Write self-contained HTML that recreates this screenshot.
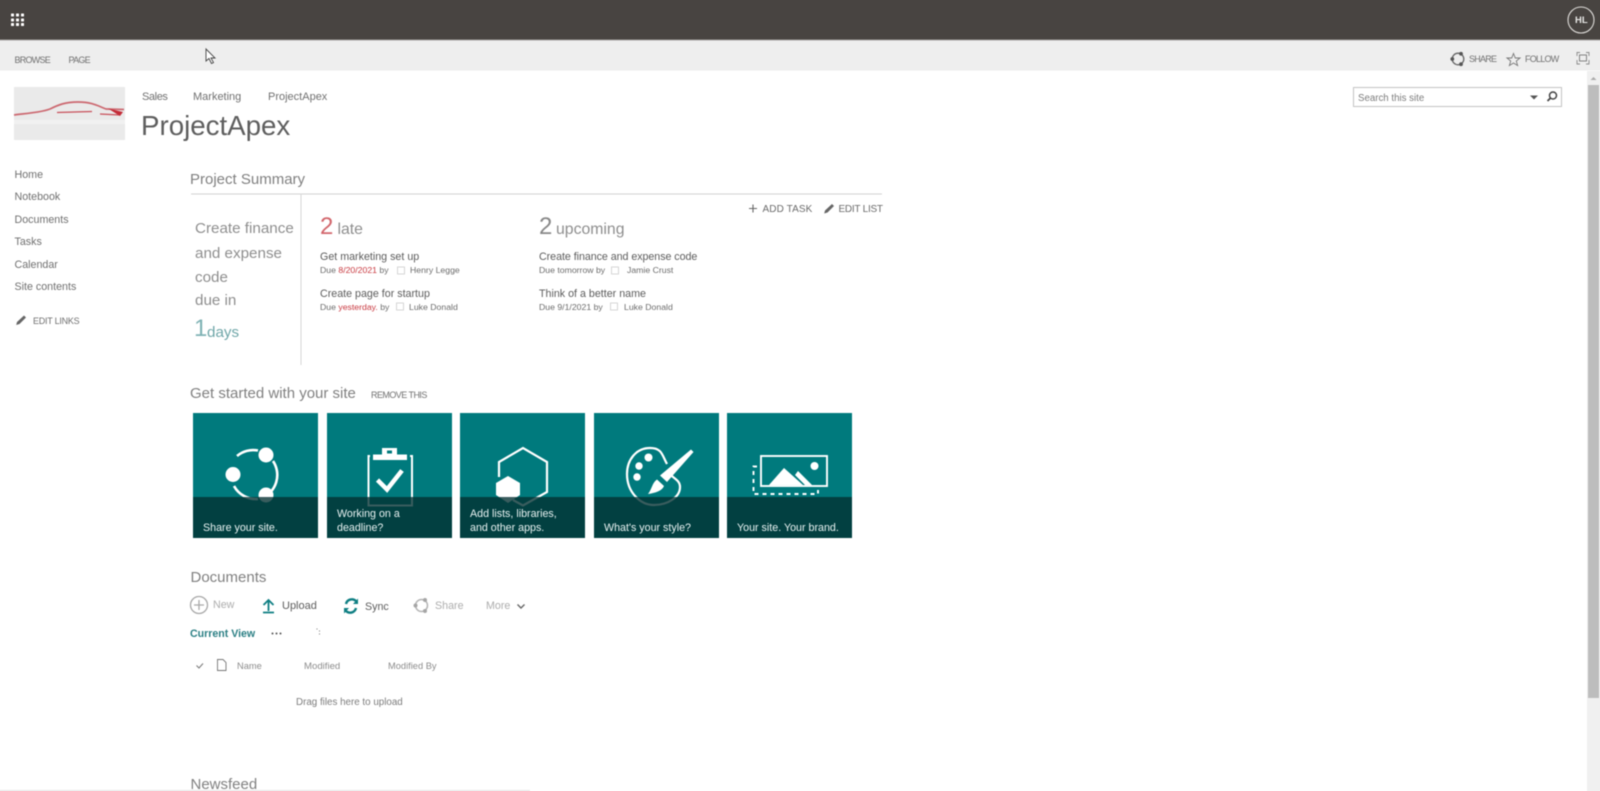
<!DOCTYPE html>
<html><head><meta charset="utf-8"><style>
html,body{margin:0;padding:0;background:#fff;width:1600px;height:791px;overflow:hidden}
body{position:relative;font-family:"Liberation Sans",sans-serif;color:#666}
#w{position:absolute;left:0;top:0;width:1600px;height:791px;filter:blur(.4px)}
.t{position:absolute;white-space:nowrap;line-height:20px;height:20px}
svg{position:absolute;left:0;top:0;overflow:visible}
.n{font-size:10.7px;color:#707070}
.s{font-size:9px;color:#707070;letter-spacing:-.75px}
.h{font-size:15px;color:#808080}
.b{font-size:15.200px;color:#8e8e8e}
.m{font-size:10.700px;color:#5c5c5c}
.d{font-size:8.700px;color:#6c6c6c}
.c{font-size:10.700px;color:#e8f2f2}
.r{color:#c8383f}
.g{font-size:10.700px;color:#adadad}
.k{font-size:9.300px;color:#8c8c8c}
.e{font-size:10px;color:#6a6a6a;letter-spacing:-.2px}
</style></head><body><div id="w">
<svg width="1600" height="791" viewBox="0 0 1600 791">
<rect x="-5" y="-5" width="1610" height="45" fill="#484441"/><rect x="-5" y="39.500" width="1610" height="1" fill="#a5a3a1"/>
<rect x="-5" y="40.500" width="1610" height="30" fill="#eeeeee"/>
<g fill="#fff"><rect x="11" y="13.500" width="3" height="3" rx=".6"/><rect x="16" y="13.500" width="3" height="3" rx=".6"/><rect x="21" y="13.500" width="3" height="3" rx=".6"/><rect x="11" y="18.500" width="3" height="3" rx=".6"/><rect x="16" y="18.500" width="3" height="3" rx=".6"/><rect x="21" y="18.500" width="3" height="3" rx=".6"/><rect x="11" y="23" width="3" height="3" rx=".6"/><rect x="16" y="23" width="3" height="3" rx=".6"/><rect x="21" y="23" width="3" height="3" rx=".6"/></g>
<circle cx="1581" cy="20" r="13" fill="none" stroke="#dedcd9" stroke-width="1.100"/>
<path d="M206 49V61L209 58.500L211.500 63.500L213.500 62.500L211 58H215Z" fill="#fff" stroke="#444" stroke-width=".9"/>
<!-- share/star/focus -->
<circle cx="1458" cy="59" r="5.800" fill="none" stroke="#666" stroke-width="1.300"/><g fill="#555"><circle cx="1461" cy="53.800" r="1.900"/><circle cx="1452.300" cy="59" r="1.900"/><circle cx="1461" cy="64.200" r="1.900"/></g>
<path d="M1513.500 53.500L1515.300 58H1520L1516.300 61L1517.600 65.500L1513.500 63L1509.400 65.500L1510.700 61L1507 58H1511.700Z" fill="none" stroke="#777" stroke-width=".9"/>
<path d="M1577 56V52.500H1580M1586 52.500H1589V56M1589 60V64H1586M1580 64H1577V60" fill="none" stroke="#8a8a8a" stroke-width=".9"/><rect x="1579.500" y="55" width="7" height="6" fill="none" stroke="#777" stroke-width=".9"/>
<!-- logo -->
<rect x="14" y="87" width="111" height="53" fill="#eaeaea"/>
<rect x="14" y="120" width="111" height="4" fill="#f1f1f1"/>
<path d="M14 115C30 113 42 112 50 109C58 105 65 102 78 102C92 102 98 106 106 109L124 109.500" fill="none" stroke="#cc6870" stroke-width="1.700"/>
<path d="M57 112.500L92 111.500M100 114L120 115" stroke="#c8505a" stroke-width="1.300" fill="none"/><path d="M108 108.500L123 112L120 116Z" fill="#c42c38"/>
<!-- search -->
<rect x="1353.500" y="87.500" width="208" height="19" fill="#fff" stroke="#c4c4c4"/>
<path d="M1530 95.500H1538L1534 99.500Z" fill="#555"/><circle cx="1553" cy="95.500" r="3.500" fill="none" stroke="#444" stroke-width="1.500"/><path d="M1550.500 98L1547.500 101" stroke="#444" stroke-width="1.800"/>
<!-- scrollbar -->
<rect x="1587" y="71" width="18" height="725" fill="#f0f0f0"/><rect x="1588" y="85" width="11" height="613" fill="#bdbdbd"/><path d="M1590.500 80L1593.500 77L1596.500 80Z" fill="#aaa"/>
<!-- lines -->
<rect x="191" y="193.500" width="691" height="1" fill="#d2d2d2"/><rect x="300.500" y="194" width="1" height="171" fill="#d6d6d6"/>
<rect x="-5" y="790" width="535" height="1" fill="#e2e2e2"/>
<path d="M749 208.500H757M753 204.500V212.500" stroke="#666" stroke-width="1.100"/>
<path d="M825 210.500L832 204L834 206L827.500 212.500L824.200 213.500Z" fill="#666"/>
<path d="M17 322L24 315.500L26 317.500L19.500 324L16.200 325Z" fill="#666"/>
<!-- tiles -->
<g fill="#007a7d"><rect x="193" y="413" width="125" height="125"/><rect x="327" y="413" width="125" height="125"/><rect x="460" y="413" width="125" height="125"/><rect x="594" y="413" width="125" height="125"/><rect x="727" y="413" width="125" height="125"/></g>
<!-- share icon -->
<path d="M237 456A25 25 0 0 1 258 450.500M273 461A25 25 0 0 1 262 498M234 486A25 25 0 0 0 258 499" fill="none" stroke="#fff" stroke-width="2.600"/><g fill="#fff"><circle cx="266" cy="455" r="7.500"/><circle cx="233" cy="474.500" r="7.500"/><circle cx="266" cy="495" r="7.500"/></g>
<!-- clipboard -->
<path d="M370 456H368.500V505.500H412V456H410" fill="none" stroke="#fff" stroke-width="2"/><path d="M373 460V454.500H382V448H397V454.500H407V460Z" fill="#fff"/><rect x="387" y="450.500" width="5" height="3" fill="#007a7d"/><path d="M377.500 480L387 489.500L402 470.500" fill="none" stroke="#fff" stroke-width="4.500"/>
<!-- hex -->
<path d="M499 477V462L523 448L547 462V492L523 505.500L513 500" fill="none" stroke="#fff" stroke-width="2.200"/><path d="M508 476L520 483V495L508 503L496 495V483Z" fill="#fff"/>
<!-- palette -->
<path d="M667 464C662 455 662 448 650 448C636 448 627 460 627 474C627 492 640 505 654 505C668 505 680 497 680 487C680 479 671 478 669 472" fill="none" stroke="#fff" stroke-width="2.200"/><g fill="#fff"><circle cx="648.500" cy="457.500" r="4"/><circle cx="639" cy="466" r="3.700"/><circle cx="637" cy="477" r="3.700"/></g><path d="M691 449.500L693.500 452L667 482L660 475.500Z" fill="#fff"/><path d="M657 479.500L664 486C662 491 655 493 648 494C652 489 652 483 657 479.500Z" fill="#fff"/>
<!-- image -->
<rect x="761" y="456" width="66" height="30" fill="none" stroke="#fff" stroke-width="1.900"/><circle cx="814.500" cy="466" r="4" fill="#fff"/><path d="M769 485L784 468L803 485Z" fill="#fff"/><path d="M795 475L798 471L812 485H805Z" fill="#fff"/><path d="M757 466.500H753.500V494H818V490" fill="none" stroke="#fff" stroke-width="1.900" stroke-dasharray="4 4"/>
<!-- bands -->
<g fill="#022f31" fill-opacity=".78"><rect x="193" y="497" width="125" height="41"/><rect x="327" y="497" width="125" height="41"/><rect x="460" y="497" width="125" height="41"/><rect x="594" y="497" width="125" height="41"/><rect x="727" y="497" width="125" height="41"/></g>
<!-- doc toolbar -->
<circle cx="199" cy="605" r="8.500" fill="none" stroke="#a8a8a8" stroke-width="1.300"/><path d="M194 605H204M199 600V610" stroke="#a8a8a8" stroke-width="1.300"/>
<path d="M268.500 600V611M263.500 605L268.500 600L273.500 605M263 612.500H274" fill="none" stroke="#0f7f83" stroke-width="1.800"/>
<path d="M346 604A6 6 0 0 1 356 601M356 608A6 6 0 0 1 346 611" fill="none" stroke="#0f7f83" stroke-width="2.400"/><path d="M353 604H358V598.500ZM349 608H344V613.500Z" fill="#0f7f83"/>
<circle cx="421.500" cy="605.500" r="6" fill="none" stroke="#b5b5b5" stroke-width="1.500"/><g fill="#a5a5a5"><circle cx="425" cy="600" r="2"/><circle cx="415.500" cy="605.500" r="2"/><circle cx="425" cy="611" r="2"/></g>
<path d="M517.500 604.500L521 608L524.500 604.500" fill="none" stroke="#666" stroke-width="1.400"/>
<g fill="#555"><circle cx="272.500" cy="633.500" r="1"/><circle cx="276.500" cy="633.500" r="1"/><circle cx="280.500" cy="633.500" r="1"/></g>
<g fill="#888"><circle cx="317" cy="629" r=".6"/><circle cx="319.500" cy="631" r=".6"/><circle cx="319.500" cy="634" r=".6"/></g>
<path d="M196.500 665.500L199 668L203 663.500" fill="none" stroke="#777" stroke-width="1"/>
<path d="M217.500 659.500H223L226 662.500V670.500H217.500Z" fill="none" stroke="#777" stroke-width=".9"/>
<!-- person boxes -->
<g fill="none" stroke="#ccc" stroke-width=".8"><rect x="397.500" y="267" width="7" height="7"/><rect x="396.500" y="303" width="7" height="7"/><rect x="611.500" y="267" width="7" height="7"/><rect x="610.500" y="303" width="7" height="7"/></g>
</svg>

<span class="t s" style="left:14.500px;top:50px">BROWSE</span>
<span class="t s" style="left:68.500px;top:50px">PAGE</span>
<span class="t s" style="left:1469px;top:49px">SHARE</span>
<span class="t s" style="left:1525px;top:49px">FOLLOW</span>
<span class="t" style="left:1575px;top:11px;font-size:9.500px;font-weight:bold;color:#e8e8e6">HL</span>

<span class="t n" style="left:142px;top:87px;font-size:11px;letter-spacing:-.4px">Sales</span>
<span class="t n" style="left:193px;top:87px;font-size:11px">Marketing</span>
<span class="t n" style="left:268px;top:87px;font-size:11px">ProjectApex</span>
<span class="t" style="left:141px;top:114px;font-size:27.700px;color:#5e5e5e;line-height:24px;height:24px">ProjectApex</span>
<span class="t" style="left:1358px;top:88.500px;font-size:9.700px;color:#7c7c7c">Search this site</span>

<span class="t n" style="left:14.500px;top:165px">Home</span>
<span class="t n" style="left:14.500px;top:187px">Notebook</span>
<span class="t n" style="left:14.500px;top:209.500px">Documents</span>
<span class="t n" style="left:14.500px;top:232px">Tasks</span>
<span class="t n" style="left:14.500px;top:254.500px">Calendar</span>
<span class="t n" style="left:14.500px;top:277px">Site contents</span>
<span class="t s" style="left:33px;top:310.500px;letter-spacing:-.25px">EDIT LINKS</span>

<span class="t h" style="left:190px;top:169.500px">Project Summary</span>
<span class="t e" style="left:762.500px;top:199.500px;letter-spacing:.1px">ADD TASK</span>
<span class="t e" style="left:838.500px;top:199.500px;letter-spacing:-.25px">EDIT LIST</span>

<span class="t b" style="left:195px;top:219px">Create finance</span>
<span class="t b" style="left:195px;top:243.500px">and expense</span>
<span class="t b" style="left:195px;top:268px">code</span>
<span class="t b" style="left:195px;top:291px">due in</span>
<span class="t" style="left:194px;top:319px;font-size:24px;color:#7fb2b4">1</span>
<span class="t b" style="left:207px;top:322.500px;color:#6fa6a8">days</span>

<span class="t" style="left:320px;top:217px;font-size:24px;color:#d2666c">2</span>
<span class="t b" style="left:337.500px;top:219.500px;font-size:15.800px">late</span>
<span class="t" style="left:539px;top:217px;font-size:24px;color:#888">2</span>
<span class="t b" style="left:556px;top:219.500px;font-size:15.800px">upcoming</span>

<span class="t m" style="left:320px;top:246.500px">Get marketing set up</span>
<span class="t d" style="left:320px;top:260px">Due <span class="r">8/20/2021</span> by</span>
<span class="t d" style="left:410px;top:260px">Henry Legge</span>
<span class="t m" style="left:320px;top:283.500px">Create page for startup</span>
<span class="t d" style="left:320px;top:297px">Due <span class="r">yesterday.</span> by</span>
<span class="t d" style="left:409px;top:297px">Luke Donald</span>
<span class="t m" style="left:539px;top:246.500px;letter-spacing:-.05px">Create finance and expense code</span>
<span class="t d" style="left:539px;top:260px">Due tomorrow by</span>
<span class="t d" style="left:627px;top:260px">Jamie Crust</span>
<span class="t m" style="left:539px;top:283.500px">Think of a better name</span>
<span class="t d" style="left:539px;top:297px">Due 9/1/2021 by</span>
<span class="t d" style="left:624px;top:297px">Luke Donald</span>

<span class="t h" style="left:190px;top:383.500px">Get started with your site</span>
<span class="t s" style="left:371px;top:385px;letter-spacing:-.55px">REMOVE THIS</span>

<span class="t c" style="left:203px;top:517.500px">Share your site.</span>
<span class="t c" style="left:337px;top:503.500px">Working on a</span>
<span class="t c" style="left:337px;top:517.500px">deadline?</span>
<span class="t c" style="left:470px;top:503.500px">Add lists, libraries,</span>
<span class="t c" style="left:470px;top:517.500px">and other apps.</span>
<span class="t c" style="left:604px;top:517.500px">What's your style?</span>
<span class="t c" style="left:737px;top:517.500px">Your site. Your brand.</span>

<span class="t h" style="left:190.500px;top:568px">Documents</span>
<span class="t g" style="left:213px;top:595px">New</span>
<span class="t m" style="left:282px;top:596px;font-size:11px">Upload</span>
<span class="t m" style="left:365px;top:597px">Sync</span>
<span class="t g" style="left:435px;top:596px">Share</span>
<span class="t g" style="left:486px;top:596px">More</span>
<span class="t" style="left:190px;top:623.500px;font-size:10.600px;font-weight:bold;color:#2b7f84">Current View</span>
<span class="t k" style="left:237px;top:656px">Name</span>
<span class="t k" style="left:304px;top:656.500px;font-size:9.600px">Modified</span>
<span class="t k" style="left:388px;top:656px">Modified By</span>
<span class="t" style="left:296px;top:692.500px;font-size:9.800px;color:#7c7c7c">Drag files here to upload</span>
<span class="t h" style="left:190.500px;top:774.500px">Newsfeed</span>
</div></body></html>
